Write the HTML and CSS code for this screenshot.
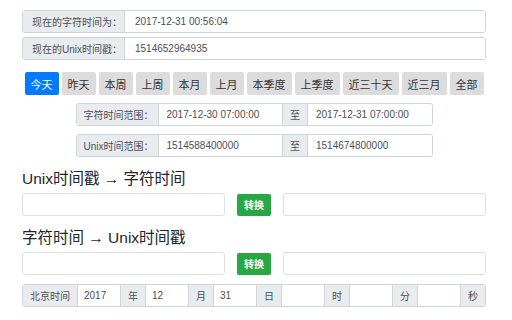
FILE: index.html
```html
<!DOCTYPE html>
<html lang="zh-CN">
<head>
<meta charset="UTF-8">
<title>时间戳转换</title>
<link rel="stylesheet" href="styles.css">
</head>
<body>
<div class="container">
  <div class="input-group now-row">
    <span class="addon">现在的字符时间为：</span>
    <input type="text" class="field" value="2017-12-31 00:56:04">
  </div>
  <div class="input-group now-row">
    <span class="addon">现在的Unix时间戳：</span>
    <input type="text" class="field" value="1514652964935">
  </div>

  <div class="btn-bar">
    <button class="btn active">今天</button>
    <button class="btn">昨天</button>
    <button class="btn">本周</button>
    <button class="btn">上周</button>
    <button class="btn">本月</button>
    <button class="btn">上月</button>
    <button class="btn">本季度</button>
    <button class="btn">上季度</button>
    <button class="btn">近三十天</button>
    <button class="btn">近三月</button>
    <button class="btn">全部</button>
  </div>

  <div class="range">
    <div class="input-group">
      <span class="addon range-label">字符时间范围：</span>
      <input type="text" class="field" value="2017-12-30 07:00:00">
      <span class="addon">至</span>
      <input type="text" class="field" value="2017-12-31 07:00:00">
    </div>
    <div class="input-group">
      <span class="addon range-label">Unix时间范围：</span>
      <input type="text" class="field" value="1514588400000">
      <span class="addon">至</span>
      <input type="text" class="field" value="1514674800000">
    </div>
  </div>

  <h3>Unix时间戳 → 字符时间</h3>
  <div class="convert">
    <input type="text" class="field box">
    <button class="btn-go">转换</button>
    <input type="text" class="field box">
  </div>

  <h3>字符时间 → Unix时间戳</h3>
  <div class="convert">
    <input type="text" class="field box">
    <button class="btn-go">转换</button>
    <input type="text" class="field box">
  </div>

  <div class="input-group date-row">
    <span class="addon">北京时间</span>
    <input type="text" class="field" value="2017">
    <span class="addon">年</span>
    <input type="text" class="field" value="12">
    <span class="addon">月</span>
    <input type="text" class="field" value="31">
    <span class="addon">日</span>
    <input type="text" class="field">
    <span class="addon">时</span>
    <input type="text" class="field">
    <span class="addon">分</span>
    <input type="text" class="field">
    <span class="addon">秒</span>
  </div>
</div>
</body>
</html>
```

FILE: styles.css
```css
body {
    margin: 0;
    padding: 0;
    background-color: #fff;
    font-family: "Liberation Sans", "Noto Sans CJK SC", sans-serif;
    font-size: 10px;
    color: #495057;
}

.container {
    width: 464px;
    margin: 0 0 0 22px;
    padding-top: 10px;
}

/* input groups */
.input-group {
    display: flex;
    height: 23px;
    border: 1px solid #ced4da;
    border-radius: 3px;
    box-sizing: border-box;
    overflow: hidden;
}

.addon {
    display: flex;
    align-items: center;
    padding: 0 7px;
    background-color: #e9ecef;
    color: #495057;
    white-space: nowrap;
    border-right: 1px solid #ced4da;
}

.field {
    flex: 1;
    min-width: 0;
    border: none;
    border-right: 1px solid #ced4da;
    padding: 0 10px;
    font: inherit;
    color: #495057;
    outline: none;
    background: #fff;
}

.input-group > :last-child {
    border-right: none;
}

.now-row {
    margin-bottom: 4px;
}

.now-row .addon {
    width: 102px;
    box-sizing: border-box;
    padding: 0 0 0 9px;
}

/* quick range buttons */
.btn-bar {
    display: flex;
    justify-content: center;
    gap: 3px;
    margin-top: 12px;
}

.btn {
    flex-shrink: 0;
    height: 23px;
    padding: 0 6px;
    border: none;
    border-radius: 2px;
    background-color: #dcdcdc;
    color: #333;
    font: inherit;
    font-size: 11px;
    white-space: nowrap;
    cursor: pointer;
}

.btn.active {
    background-color: #007bff;
    color: #fff;
}

.range {
    width: 357px;
    margin: 8px auto 0;
}

.range .input-group {
    margin-bottom: 8px;
}

.range-label {
    width: 82px;
    box-sizing: border-box;
}

.range .field {
    padding: 0 8px;
}

/* converters */
h3 {
    margin: 13px 0 5px;
    font-size: 15.5px;
    font-weight: normal;
    color: #212529;
    line-height: 18px;
}

.convert {
    display: grid;
    grid-template-columns: 1fr 34px 1fr;
    gap: 12px;
    align-items: center;
}

.field.box {
    height: 23px;
    border: 1px solid #dcdfe3;
    border-radius: 3px;
    box-sizing: border-box;
}

.btn-go {
    height: 22px;
    padding: 0;
    border: none;
    border-radius: 2px;
    background-color: #28a745;
    color: #fff;
    font: inherit;
    font-weight: bold;
}

.date-row {
    margin-top: 9px;
}

.date-row .field {
    padding: 0 6px;
}
```
